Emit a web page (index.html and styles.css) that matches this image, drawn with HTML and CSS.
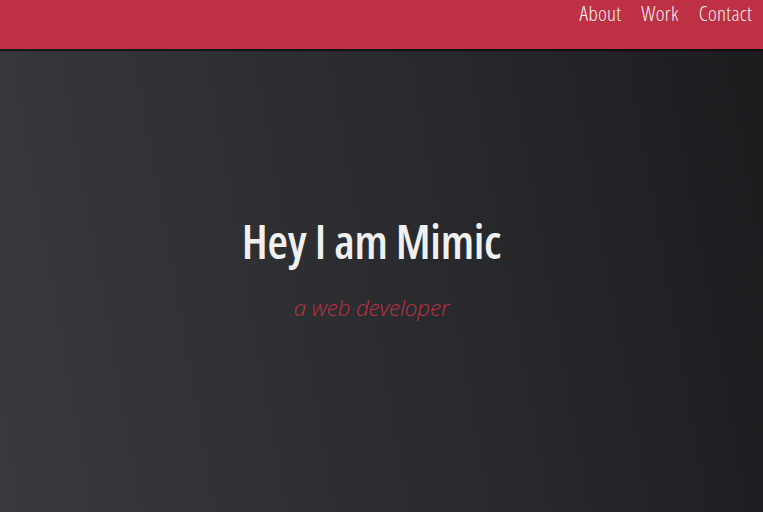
FILE: index.html
```html
<!DOCTYPE html>
<html lang="en">
<head>
<meta charset="utf-8">
<title>Mimic</title>
<link rel="stylesheet" href="styles.css">
</head>
<body>
<header class="topbar">
  <nav class="nav">
    <a class="nav-link" href="#about">About</a>
    <a class="nav-link" href="#work">Work</a>
    <a class="nav-link" href="#contact">Contact</a>
  </nav>
</header>
<main class="hero">
  <h1 class="hero-title">Hey I am Mimic</h1>
  <p class="hero-sub">a web developer</p>
</main>
</body>
</html>
```
FILE: styles.css
```css
html, body {
  margin: 0;
  padding: 0;
  height: 100%;
}
body {
  font-family: "Open Sans", "Liberation Sans", sans-serif;
  font-stretch: 75%;
  background: #1c1d1f;
  overflow: hidden;
}
.topbar {
  position: relative;
  z-index: 2;
  height: 49px;
  background: #be3144;
  box-shadow: 0 2px 1px rgba(0, 0, 0, 0.55);
  display: flex;
  justify-content: flex-end;
  align-items: flex-start;
}
.nav {
  display: flex;
  gap: 20px;
  padding: 1px 11px 0 0;
}
.nav-link {
  color: #f2f2f2;
  text-decoration: none;
  font-size: 21px;
  font-weight: 300;
  font-stretch: 75%;
  letter-spacing: 0.3px;
  line-height: 25px;
}
.hero {
  height: calc(100% - 49px);
  background: linear-gradient(80deg, #37393d 0%, #2a2c2f 50%, #1b1c1e 100%);
  display: flex;
  flex-direction: column;
  align-items: center;
  padding: 164px 20px 0 0;
  box-sizing: border-box;
}
.hero-title {
  margin: 0;
  color: #f0f0f0;
  font-size: 47px;
  font-weight: 600;
  letter-spacing: -0.3px;
  line-height: 56px;
}
.hero-sub {
  margin: 24px 0 0;
  color: #be3144;
  font-size: 22.5px;
  font-style: italic;
  font-weight: 300;
  font-stretch: 100%;
  letter-spacing: -0.2px;
  line-height: 30px;
}
```
